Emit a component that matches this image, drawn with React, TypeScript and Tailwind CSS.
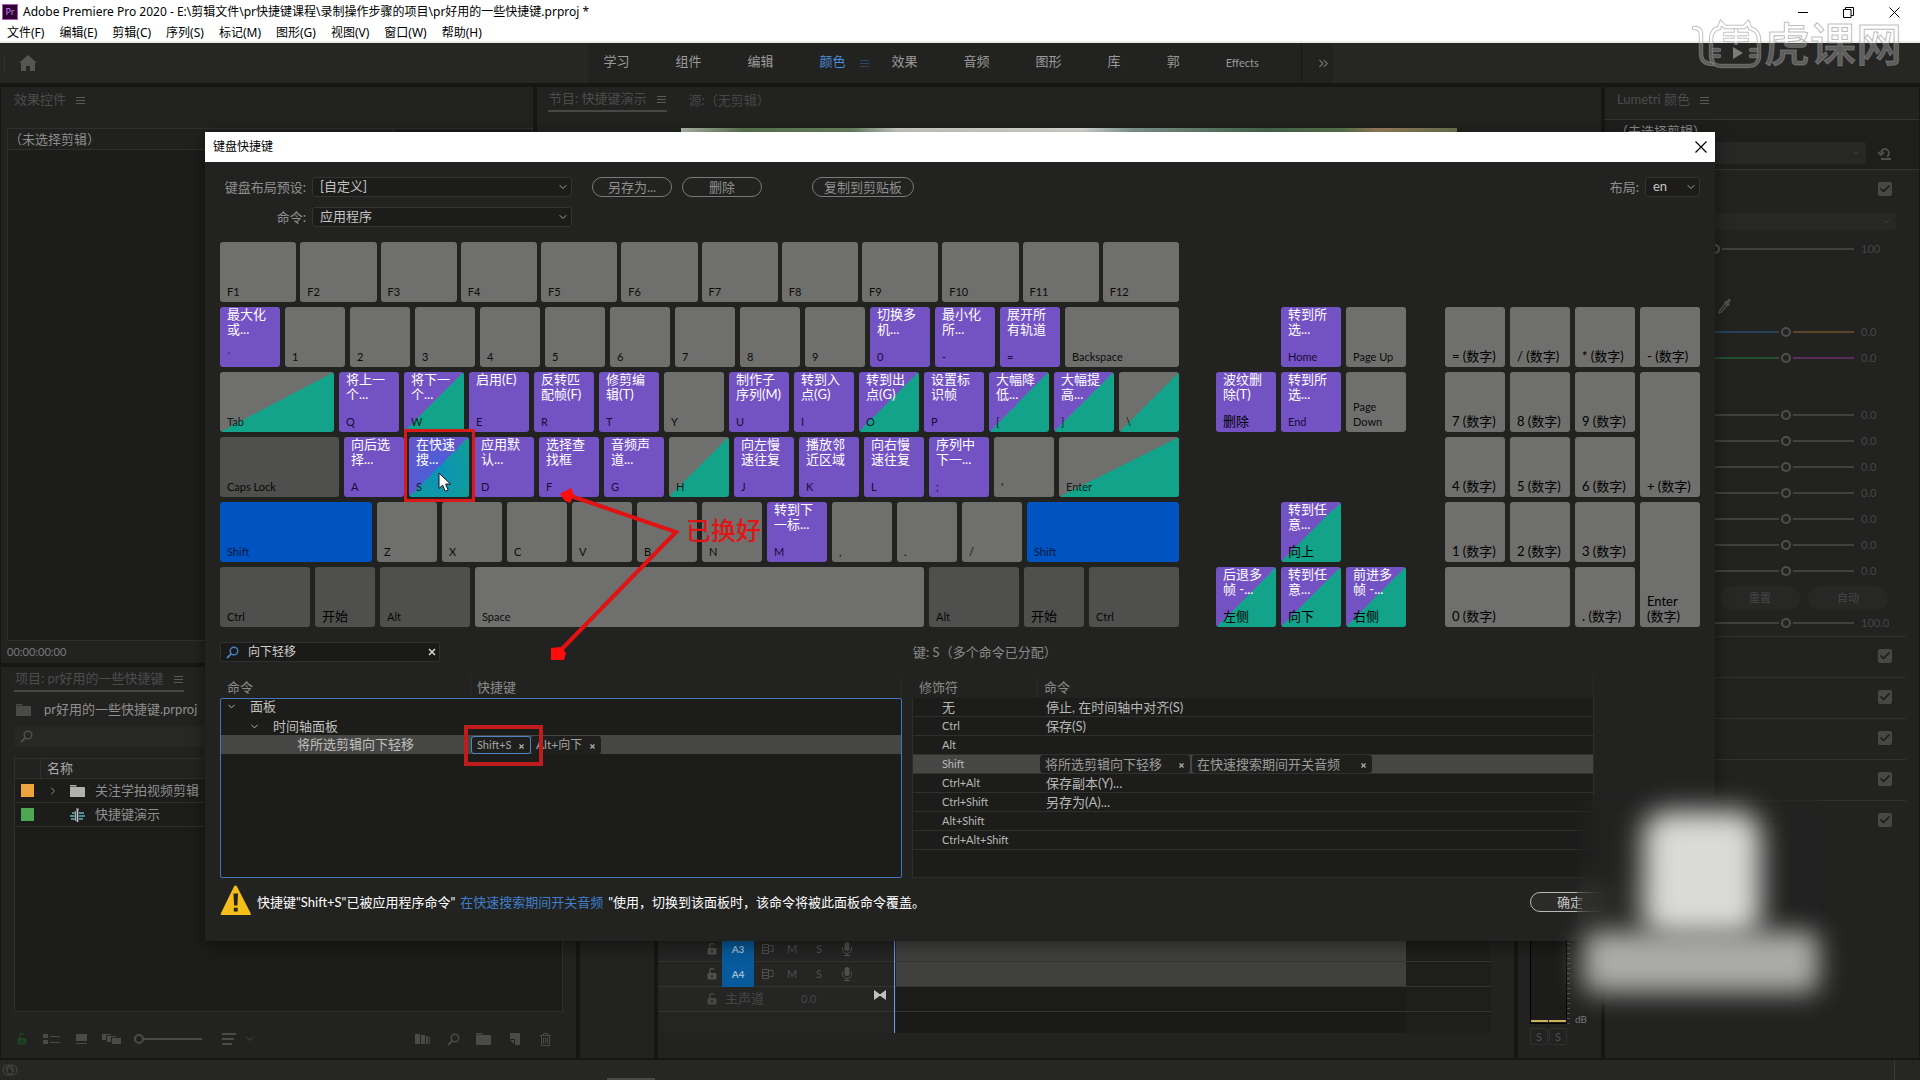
import type { ReactNode } from "react";
import { Check, ChevronDown, ChevronRight, ChevronsRight, X } from "lucide-react";

type KeyDef = {
  label: string;
  cmd?: string;
  tone?: "gray" | "dark" | "purple" | "blue";
  split?: boolean;
  size?: string;
  active?: boolean;
};

const tones = {
  gray: "bg-[#6f6f6d] text-[#0c0c0c]",
  dark: "bg-[#4f4f4d] text-[#080808]",
  purple: "bg-[#7352c4] text-[#170d38]",
  blue: "bg-[#0054c2] text-[#04183a]",
};

const splitTones = {
  gray: "bg-[linear-gradient(to_bottom_right,#6f6f6d_50%,#13a38a_50%)] text-[#0c1a18]",
  dark: "bg-[#4f4f4d]",
  purple: "bg-[linear-gradient(to_bottom_right,#7352c4_50%,#13a38a_50%)] text-[#0a1c24]",
  blue: "bg-[#0054c2]",
};

const functionKeys: KeyDef[] = [
  "F1", "F2", "F3", "F4", "F5", "F6", "F7", "F8", "F9", "F10", "F11", "F12",
].map((label) => ({ label, size: "flex-1" }));

const mainRows: KeyDef[][] = [
  [
    { label: "`", cmd: "最大化\n或...", tone: "purple" },
    { label: "1" },
    { label: "2" },
    { label: "3" },
    { label: "4" },
    { label: "5" },
    { label: "6" },
    { label: "7" },
    { label: "8" },
    { label: "9" },
    { label: "0", cmd: "切换多\n机...", tone: "purple" },
    { label: "-", cmd: "最小化\n所...", tone: "purple" },
    { label: "=", cmd: "展开所\n有轨道", tone: "purple" },
    { label: "Backspace", size: "flex-1" },
  ],
  [
    { label: "Tab", split: true, size: "w-[114px]" },
    { label: "Q", cmd: "将上一\n个...", tone: "purple" },
    { label: "W", cmd: "将下一\n个...", tone: "purple", split: true },
    { label: "E", cmd: "启用(E)", tone: "purple" },
    { label: "R", cmd: "反转匹\n配帧(F)", tone: "purple" },
    { label: "T", cmd: "修剪编\n辑(T)", tone: "purple" },
    { label: "Y" },
    { label: "U", cmd: "制作子\n序列(M)", tone: "purple" },
    { label: "I", cmd: "转到入\n点(G)", tone: "purple" },
    { label: "O", cmd: "转到出\n点(G)", tone: "purple", split: true },
    { label: "P", cmd: "设置标\n识帧", tone: "purple" },
    { label: "[", cmd: "大幅降\n低...", tone: "purple", split: true },
    { label: "]", cmd: "大幅提\n高...", tone: "purple", split: true },
    { label: "\\", split: true, size: "flex-1" },
  ],
  [
    { label: "Caps Lock", tone: "dark", size: "w-[119px]" },
    { label: "A", cmd: "向后选\n择...", tone: "purple" },
    { label: "S", cmd: "在快速\n搜...", tone: "purple", split: true, active: true },
    { label: "D", cmd: "应用默\n认...", tone: "purple" },
    { label: "F", cmd: "选择查\n找框", tone: "purple" },
    { label: "G", cmd: "音频声\n道...", tone: "purple" },
    { label: "H", split: true },
    { label: "J", cmd: "向左慢\n速往复", tone: "purple" },
    { label: "K", cmd: "播放邻\n近区域", tone: "purple" },
    { label: "L", cmd: "向右慢\n速往复", tone: "purple" },
    { label: ";", cmd: "序列中\n下一...", tone: "purple" },
    { label: "'" },
    { label: "Enter", split: true, size: "flex-1" },
  ],
  [
    { label: "Shift", tone: "blue", size: "w-[152px]" },
    { label: "Z" },
    { label: "X" },
    { label: "C" },
    { label: "V" },
    { label: "B" },
    { label: "N" },
    { label: "M", cmd: "转到下\n一标...", tone: "purple" },
    { label: "," },
    { label: "." },
    { label: "/" },
    { label: "Shift", tone: "blue", size: "flex-1" },
  ],
  [
    { label: "Ctrl", tone: "dark", size: "w-[90px]" },
    { label: "开始", tone: "dark" },
    { label: "Alt", tone: "dark", size: "w-[90px]" },
    { label: "Space", size: "flex-1" },
    { label: "Alt", tone: "dark", size: "w-[90px]" },
    { label: "开始", tone: "dark" },
    { label: "Ctrl", tone: "dark", size: "w-[90px]" },
  ],
];

const navKeys: (KeyDef | null)[] = [
  null,
  { label: "Home", cmd: "转到所\n选...", tone: "purple" },
  { label: "Page Up" },
  { label: "删除", cmd: "波纹删\n除(T)", tone: "purple" },
  { label: "End", cmd: "转到所\n选...", tone: "purple" },
  { label: "Page\nDown" },
  null,
  null,
  null,
  null,
  { label: "向上", cmd: "转到任\n意...", tone: "purple", split: true },
  null,
  { label: "左侧", cmd: "后退多\n帧 -...", tone: "purple", split: true },
  { label: "向下", cmd: "转到任\n意...", tone: "purple", split: true },
  { label: "右侧", cmd: "前进多\n帧 -...", tone: "purple", split: true },
];

const numKeys: KeyDef[] = [
  { label: "= (数字)" },
  { label: "/ (数字)" },
  { label: "* (数字)" },
  { label: "- (数字)" },
  { label: "7 (数字)" },
  { label: "8 (数字)" },
  { label: "9 (数字)" },
  { label: "+ (数字)", size: "row-span-2 h-auto" },
  { label: "4 (数字)" },
  { label: "5 (数字)" },
  { label: "6 (数字)" },
  { label: "1 (数字)" },
  { label: "2 (数字)" },
  { label: "3 (数字)" },
  { label: "Enter\n(数字)", size: "row-span-2 h-auto" },
  { label: "0 (数字)", size: "col-span-2" },
  { label: ". (数字)" },
];

const modifiers = [
  { mod: "无", cmd: "停止, 在时间轴中对齐(S)" },
  { mod: "Ctrl", cmd: "保存(S)" },
  { mod: "Alt", cmd: "" },
  { mod: "Shift", chips: ["将所选剪辑向下轻移", "在快速搜索期间开关音频"] },
  { mod: "Ctrl+Alt", cmd: "保存副本(Y)..." },
  { mod: "Ctrl+Shift", cmd: "另存为(A)..." },
  { mod: "Alt+Shift", cmd: "" },
  { mod: "Ctrl+Alt+Shift", cmd: "" },
];

const menus = [
  "文件(F)", "编辑(E)", "剪辑(C)", "序列(S)", "标记(M)", "图形(G)", "视图(V)", "窗口(W)", "帮助(H)",
];

const workspaces = ["学习", "组件", "编辑", "颜色", "效果", "音频", "图形", "库", "郭", "Effects"];

function hasCjk(text: string) {
  return /[\u3000-\u9fff]/.test(text);
}

function Burger({ className = "" }: { className?: string }) {
  return (
    <svg width="9" height="9" viewBox="0 0 9 9" className={className}>
      <path d="M0 1.5h9M0 4.5h9M0 7.5h9" stroke="currentColor" strokeWidth="1" />
    </svg>
  );
}

function MagnifierIcon({ className = "" }: { className?: string }) {
  return (
    <svg width="13" height="13" viewBox="0 0 13 13" fill="none" className={className}>
      <circle cx="8" cy="5" r="3.8" stroke="currentColor" strokeWidth="1.4" />
      <path d="M5.2 7.8L1 12" stroke="currentColor" strokeWidth="1.8" />
    </svg>
  );
}

function FolderIcon({ className = "" }: { className?: string }) {
  return (
    <svg width="15" height="12" viewBox="0 0 15 12" className={className}>
      <path d="M0 0h6l1 1.5H0zM0 2h14a1 1 0 0 1 1 1v9H0z" fill="currentColor" />
    </svg>
  );
}

function LockIcon({ className = "" }: { className?: string }) {
  return (
    <svg width="10" height="12" viewBox="0 0 10 12" fill="none" className={className}>
      <path d="M3 6V3a2 2 0 0 1 4-1" stroke="currentColor" strokeWidth="1.4" />
      <path d="M1 5.5h8V11H1zM5 7v2.5" fill="currentColor" stroke="currentColor" />
      <path d="M5 7v2.5" stroke="#222221" strokeWidth="1.4" />
    </svg>
  );
}

function Key({ item }: { item: KeyDef }) {
  const tone = item.tone ?? "gray";
  const color = item.split ? splitTones[tone] : tones[tone];
  return (
    <button
      type="button"
      className={`relative flex min-h-[60px] flex-col justify-between overflow-visible rounded-[3px] pr-1 pb-[3px] pl-[7px] text-left ${
        item.size ?? "w-[60px]"
      } ${color}`}
    >
      {item.active && (
        <span className="absolute inset-0 rounded-[3px] bg-[radial-gradient(circle_at_50%_60%,rgba(0,120,255,0.4),rgba(0,120,255,0.08))]" />
      )}
      <span className="relative whitespace-pre text-[13px] leading-[15px] text-white">{item.cmd}</span>
      <span className={`relative whitespace-pre leading-[15px] ${hasCjk(item.label) ? "text-[13px] text-black" : "text-[11px]"}`}>
        {item.label}
      </span>
      {item.active && (
        <>
          <span className="absolute -top-[8px] -right-[6px] -bottom-[5px] -left-[5px] z-10 border-[3px] border-[#d81a1a]" />
          <svg width="14" height="22" viewBox="0 0 14 22" className="absolute top-[35px] left-[29px] z-10">
            <path d="M1 1v15.5l3.6-3.3 2.6 6 3-1.3-2.6-5.8H12.500z" fill="#fff" stroke="#111" strokeWidth="1" />
          </svg>
        </>
      )}
    </button>
  );
}

function Keyboard() {
  return (
    <div className="relative mt-[15px] flex items-end">
      <div className="flex w-[959px] flex-col gap-[5px]">
        <div className="flex gap-1">
          {functionKeys.map((k) => (
            <Key key={k.label} item={k} />
          ))}
        </div>
        {mainRows.map((row, i) => (
          <div key={i} className="flex gap-[5px]">
            {row.map((k, j) => (
              <Key key={j} item={k} />
            ))}
          </div>
        ))}
      </div>
      <div className="ml-[37px] grid auto-rows-[60px] grid-cols-[60px_60px_60px] gap-[5px]">
        {navKeys.map((k, i) => (k ? <Key key={i} item={k} /> : <span key={i} />))}
      </div>
      <div className="ml-auto grid auto-rows-[60px] grid-cols-[60px_60px_60px_60px] gap-[5px]">
        {numKeys.map((k) => (
          <Key key={k.label} item={{ ...k, size: k.size ?? "w-[60px]" }} />
        ))}
      </div>
      <Annotation />
    </div>
  );
}

function Annotation() {
  return (
    <div className="pointer-events-none absolute top-[240px] left-[320px] z-20">
      <svg width="150" height="190" viewBox="0 0 150 190">
        <path d="M28 13L136 50L19 170" fill="none" stroke="#e01212" strokeWidth="4" />
        <path d="M20 12l11-6 3 7-4 8-5-2zM11 166l10-1 5 6-2 7H11z" fill="#ff0d0d" />
      </svg>
      <span className="absolute top-[30px] left-[146px] text-[25px] leading-[36px] font-medium whitespace-nowrap text-[#e01616]">
        已换好
      </span>
    </div>
  );
}

function Dropdown({ id, value, className }: { id: string; value: string; className: string }) {
  return (
    <span className={`relative flex ${className}`}>
      <select
        id={id}
        defaultValue={value}
        className="h-5 w-full appearance-none rounded-[3px] border border-[#333332] bg-[#1c1c1b] px-[7px] pb-[2px] text-[13px] leading-[16px] text-[#c4c4c2]"
      >
        <option>{value}</option>
      </select>
      <ChevronDown size={12} className="pointer-events-none absolute top-1 right-[3px] text-[#a0a09e]" />
    </span>
  );
}

function PillButton({ children, className }: { children: ReactNode; className: string }) {
  return (
    <button type="button" className={`h-5 rounded-full border text-[13px] leading-[17px] whitespace-nowrap ${className}`}>
      {children}
    </button>
  );
}

function Chip({ text, className }: { text: string; className: string }) {
  return (
    <span className={`inline-flex h-[18px] items-center justify-between rounded-[3px] bg-[#1f1f1e] px-[5px] ${className}`}>
      {text}
      <button type="button" aria-label="移除" className="pt-[3px] text-[#b0b0ae]">
        <X size={7} strokeWidth={4} />
      </button>
    </span>
  );
}

function CommandList() {
  return (
    <div className="w-[682px]">
      <div className="flex h-[22px] text-[13px] leading-[22px] text-[#8a8a88]">
        <span className="w-[251px] border-r border-[#2a2a29] pl-[7px]">命令</span>
        <span className="flex-1 border-r border-[#2a2a29] pl-[6px]">快捷键</span>
      </div>
      <div className="h-[180px] rounded-[2px] border border-[#4377b4] bg-[#1c1c1b]">
        <table aria-label="命令" className="w-full border-separate border-spacing-0 text-[13px] leading-[17px] text-[#c0c0be]">
          <tbody>
            <tr className="h-[18px]">
              <td className="w-[250px] p-0">
                <span className="flex h-[18px] items-center gap-[13px] pb-1 pl-[5px]">
                  <ChevronDown size={11} />
                  面板
                </span>
              </td>
              <td />
            </tr>
            <tr className="h-[18px]">
              <td className="p-0">
                <span className="flex h-[18px] items-center gap-[13px] pl-[28px]">
                  <ChevronDown size={11} />
                  时间轴面板
                </span>
              </td>
              <td />
            </tr>
            <tr className="h-[19px] bg-[#464645]">
              <td className="p-0 pl-[76px]">将所选剪辑向下轻移</td>
              <td className="p-0">
                <span className="relative flex leading-[14px] text-[#a5a5a3]">
                  <Chip text="Shift+S" className="w-[60px] border border-[#4f86c6] text-[11px]" />
                  <Chip text="Alt+向下" className="w-[70px] text-[12px]" />
                  <span className="absolute -top-[11px] -left-[7px] h-[41px] w-[79px] border-[4px] border-[#c01c1c]" />
                </span>
              </td>
            </tr>
          </tbody>
        </table>
      </div>
    </div>
  );
}

function ModifierList() {
  return (
    <div className="w-[682px]">
      <div className="flex h-[22px] text-[13px] leading-[22px] text-[#8a8a88]">
        <span className="w-[126px] border-r border-[#2a2a29] pl-[7px]">修饰符</span>
        <span className="flex-1 border-r border-[#2a2a29] pl-[6px]">命令</span>
      </div>
      <div className="h-[180px] border border-t-0 border-[#2e2e2d] bg-[#1c1c1b]">
        <table aria-label="修饰符" className="w-full border-separate border-spacing-0 leading-[16px] text-[#b8b8b6]">
          <tbody>
            {modifiers.map((m) => (
              <tr key={m.mod} className={`h-[19px] ${m.chips ? "bg-[#464645]" : ""}`}>
                <td className={`w-[127px] border-b border-[#30302f] p-0 pl-[29px] ${hasCjk(m.mod) ? "text-[13px]" : "text-[11px]"}`}>
                  {m.mod}
                </td>
                <td className="border-b border-[#30302f] p-0">
                  {m.chips ? (
                    <span className="flex gap-[2px] text-[13px] leading-[16px] text-[#9b9b99]">
                      <Chip text={m.chips[0]} className="w-[150px]" />
                      <Chip text={m.chips[1]} className="w-[180px]" />
                    </span>
                  ) : (
                    <span className="flex pl-[6px] text-[13px] leading-[16px] whitespace-pre">{m.cmd}</span>
                  )}
                </td>
              </tr>
            ))}
          </tbody>
        </table>
      </div>
    </div>
  );
}

function ShortcutDialog() {
  return (
    <section
      role="dialog"
      aria-label="键盘快捷键"
      className="w-[1510px] bg-[#222221] shadow-[0_4px_16px_rgba(0,0,0,0.45)]"
    >
      <header className="flex h-[30px] items-center justify-between bg-white pr-2 pl-2 font-['Noto_Sans','Noto_Sans_CJK_SC',sans-serif] text-[12px] text-black">
        <h1>键盘快捷键</h1>
        <button type="button" aria-label="关闭">
          <svg width="12" height="12" viewBox="0 0 12 12" stroke="#000" strokeWidth="1.200">
            <path d="M.5.5l11 11M11.500.5l-11 11" />
          </svg>
        </button>
      </header>
      <div className="px-[15px] pt-[15px] pb-[26px]">
        <div className="flex items-center text-[13px] leading-5 text-[#8f8f8d]">
          <label htmlFor="preset" className="w-[86px] text-right whitespace-nowrap">
            键盘布局预设:
          </label>
          <Dropdown id="preset" value="[自定义]" className="ml-[6px] w-[260px]" />
          <PillButton className="ml-5 w-20 border-[#7a7a78]">另存为...</PillButton>
          <PillButton className="ml-[10px] w-20 border-[#7a7a78]">删除</PillButton>
          <PillButton className="ml-[50px] w-[102px] border-[#7a7a78]">复制到剪贴板</PillButton>
          <label htmlFor="layout" className="ml-auto">
            布局:
          </label>
          <Dropdown id="layout" value="en" className="ml-[6px] w-[55px]" />
        </div>
        <div className="mt-[10px] flex items-center text-[13px] leading-5 text-[#8f8f8d]">
          <label htmlFor="scope" className="w-[86px] text-right">
            命令:
          </label>
          <Dropdown id="scope" value="应用程序" className="ml-[6px] w-[260px]" />
        </div>

        <Keyboard />

        <div className="mt-[15px] flex items-center">
          <div className="flex h-5 w-[220px] items-center rounded-[2px] border border-[#30302f] bg-[#1a1a19] pr-[2px] pl-[5px]">
            <MagnifierIcon className="text-[#4a80c0]" />
            <input
              aria-label="搜索"
              defaultValue="向下轻移"
              className="ml-[9px] min-w-0 flex-1 bg-transparent text-[12px] leading-[18px] text-[#cfcfcd] outline-none"
            />
            <button type="button" aria-label="清除" className="text-[#d0d0ce]">
              <X size={10} strokeWidth={4} />
            </button>
          </div>
          <p className="ml-[473px] text-[13px] leading-5 text-[#8a8a88]">键: S（多个命令已分配）</p>
        </div>

        <div className="mt-[14px] flex gap-[10px]">
          <CommandList />
          <ModifierList />
        </div>

        <footer className="mt-[7px] flex items-center">
          <svg width="32" height="30" viewBox="0 0 32 30">
            <path d="M15.500 0.500q1 0 1.500 1L30.800 28.500q.5 1.500-1 1.500H1.800q-1.500 0-1-1.500L14 1.500q.500-1 1.500-1z" fill="#f5bd1c" />
            <path d="M13.500 8.500h4.500l-.6 12h-3.300zM13.800 22.800h3.900v3.700h-3.900z" fill="#222221" />
          </svg>
          <p className="ml-[5px] pt-1 text-[13px] leading-5 text-white">
            快捷键"Shift+S"已被应用程序命令"
            <a href="#command" className="mx-[5px] text-[#3f7fc8]">
              在快速搜索期间开关音频
            </a>
            "使用，切换到该面板时，该命令将被此面板命令覆盖。
          </p>
          <PillButton className="mt-1 ml-auto w-20 border-[#b8b8b6] bg-[#2b2b2a] text-[#c8c8c6]">确定</PillButton>
          <PillButton className="mt-1 ml-[10px] w-20 border-[#7a7a78] text-[#8f8f8d]">取消</PillButton>
        </footer>
      </div>
    </section>
  );
}

function TitleBar() {
  return (
    <header className="border-b-2 border-[#e9ece9] bg-white font-['Noto_Sans','Noto_Sans_CJK_SC',sans-serif] text-[12px] text-black">
      <div className="flex h-6 items-center pr-[20px] pl-[2px]">
        <span className="flex size-4 items-center justify-center border border-[#b455b4] bg-[#2b0033] text-[9px] leading-3 text-[#dd88ee]">
          Pr
        </span>
        <h1 className="ml-[5px] leading-5">Adobe Premiere Pro 2020 - E:\剪辑文件\pr快捷键课程\录制操作步骤的项目\pr好用的一些快捷键.prproj *</h1>
        <div className="ml-auto flex items-center gap-[35px]">
          <button type="button" aria-label="最小化" className="flex h-3 w-[10px] items-center">
            <span className="h-px w-full bg-black" />
          </button>
          <button type="button" aria-label="还原">
            <svg width="11" height="11" viewBox="0 0 11 11" fill="none" stroke="#000">
              <path d="M.5 2.500h7.500v8H.5zM2.500 2.500V.5h8v8H8" />
            </svg>
          </button>
          <button type="button" aria-label="关闭窗口">
            <svg width="11" height="11" viewBox="0 0 11 11" stroke="#000">
              <path d="M.5.5l10 10M10.500.5l-10 10" />
            </svg>
          </button>
        </div>
      </div>
      <nav className="flex h-[17px] gap-[15px] pl-[7px] leading-[16px]">
        {menus.map((m) => (
          <button key={m} type="button">
            {m}
          </button>
        ))}
      </nav>
    </header>
  );
}

function WorkspaceBar() {
  return (
    <nav className="flex h-10 items-stretch bg-[#262625] text-[13px] text-[#9a9a98]">
      <div className="flex flex-1">
        <div className="ml-1 w-1 self-center border-l border-dotted border-[#3a3a39] py-2" />
        <button type="button" aria-label="主页" className="ml-[11px] text-[#555553]">
          <svg width="18" height="16" viewBox="0 0 18 16">
            <path d="M9 0l9 8h-2v8h-5v-5H7v5H2V8H0z" fill="currentColor" />
          </svg>
        </button>
      </div>
      <div className="flex w-[714px] items-center gap-[46px] border-r border-[#161615] bg-[#222221] pb-[2px] pl-4">
        {workspaces.map((w) => (
          <button
            key={w}
            type="button"
            className={`relative ${w === "颜色" ? "text-[#4a8ddb]" : ""} ${hasCjk(w) ? "" : "pt-[2px] text-[11px] leading-4"}`}
          >
            {w}
            {w === "颜色" && <Burger className="absolute top-[7px] left-10 text-[#2c4468]" />}
          </button>
        ))}
      </div>
      <button type="button" aria-label="更多工作区" className="flex w-[31px] items-center justify-end bg-[#222221] pr-[2px] text-[#70706e]">
        <ChevronsRight size={15} />
      </button>
      <div className="flex-1" />
    </nav>
  );
}

function PanelTab({ title, active }: { title: string; active?: boolean }) {
  return (
    <div className={`flex h-[25px] items-center gap-[10px] px-px pt-px text-[13px] text-[#4c4c4a] ${active ? "border-b-2 border-[#474745]" : ""}`}>
      <span className="whitespace-nowrap">{title}</span>
      <Burger className="text-[#5a5a58]" />
    </div>
  );
}

function EffectControls() {
  return (
    <section className="flex w-[532px] flex-col bg-[#222221] pl-[6px]">
      <div className="flex h-[41px] pl-[6px]">
        <PanelTab title="效果控件" />
      </div>
      <div className="flex-1 border border-[#2f2f2e] bg-[#1c1c1b]">
        <p className="h-[21px] w-[386px] border-r border-b border-[#2f2f2e] bg-[#20201f] pl-px text-[13px] leading-5 text-[#8c8c8a]">
          （未选择剪辑）
        </p>
      </div>
      <p className="h-[22px] text-[11px] leading-[22px] text-[#7a7a78]">00:00:00:00</p>
    </section>
  );
}

function ProgramMonitor() {
  return (
    <section className="min-w-0 flex-1 bg-[#222221]">
      <div className="flex h-[41px] gap-[22px] pl-[11px]">
        <PanelTab title="节目: 快捷键演示" active />
        <span className="text-[13px] leading-[26px] text-[#464644]">源:（无剪辑）</span>
      </div>
      <div className="mx-[144px] h-[430px] bg-[linear-gradient(to_right,#b8c0b4,#5e7a52_8%,#6f8a66_22%,#d4d4ce_28%,#e0e0dc_52%,#88a098_58%,#4a6a50_75%,#5a7850_85%,#a08060_90%,#6a7850)]" />
    </section>
  );
}

function ProjectPanel() {
  return (
    <section className="flex w-[575px] flex-col bg-[#222221] px-[13px]">
      <div className="flex">
        <PanelTab title="项目: pr好用的一些快捷键" active />
      </div>
      <div className="mt-[7px] flex h-[22px] items-center gap-[13px] pl-[2px] text-[13px] text-[#8f8f8d]">
        <FolderIcon className="text-[#4a4a48]" />
        pr好用的一些快捷键.prproj
      </div>
      <div className="mt-[5px] flex h-[21px] items-center rounded-[2px] bg-[#272726] pl-[6px]">
        <MagnifierIcon className="text-[#50504e]" />
        <input aria-label="搜索项目" className="flex-1 bg-transparent text-[13px] outline-none" />
      </div>
      <div className="mt-[11px] flex-1 border border-[#2f2f2e] bg-[#1c1c1b] text-[13px] text-[#8f8f8d]">
        <div className="flex h-[20px] items-center border-b border-[#2f2f2e] bg-[#222221]">
          <span className="h-full w-[26px] border-r border-[#2f2f2e]" />
          <span className="pl-[6px] text-[#a8a8a6]">名称</span>
        </div>
        <div className="flex h-[24px] items-center border-b border-[#2f2f2e] pl-[6px]">
          <span className="size-[13px] bg-[#eea33c]" />
          <ChevronRight size={12} className="ml-[13px]" />
          <FolderIcon className="ml-[11px] text-[#b0b0ae]" />
          <span className="ml-[10px]">关注学拍视频剪辑</span>
        </div>
        <div className="flex h-[24px] items-center border-b border-[#2f2f2e] pl-[6px]">
          <span className="size-[13px] bg-[#4ea852]" />
          <svg width="15" height="14" viewBox="0 0 15 14" fill="none" className="ml-[36px]">
            <path d="M2 5h4M9 5h5M0 8h6M9 8h6M1 11h5M9 11h4" stroke="#4a8f94" strokeWidth="2" />
            <path d="M7.500 1v13" stroke="#c8c8c6" strokeWidth="1.600" />
            <path d="M5.500 3v10M6 1h3" stroke="#a8a8a6" />
          </svg>
          <span className="ml-[10px]">快捷键演示</span>
        </div>
      </div>
      <div className="flex h-[46px] items-center pt-2 text-[#4a4a48]">
        <LockIcon className="ml-[3px] text-[#1b4420]" />
        <svg width="17" height="12" viewBox="0 0 17 12" className="ml-[16px]">
          <path d="M0 1h5v4H0zM0 7h5v4H0zM7 3h10v1H7zM7 9h10v1H7z" fill="currentColor" />
        </svg>
        <svg width="11" height="12" viewBox="0 0 11 12" className="ml-4">
          <path d="M0 1h11v7H0zM0 10h11v1H0z" fill="currentColor" />
        </svg>
        <svg width="19" height="12" viewBox="0 0 19 12" className="ml-[15px]">
          <path d="M0 1h9v1H4v5H0zM5 3h9v1H9v5H5zM10 5h9v6h-9z" fill="currentColor" />
        </svg>
        <input
          type="range"
          aria-label="图标大小"
          defaultValue={0}
          className="ml-[13px] h-[10px] w-[68px] appearance-none bg-[linear-gradient(#4a4a48,#4a4a48)] bg-[length:100%_2px] bg-center bg-no-repeat [&::-webkit-slider-thumb]:size-[10px] [&::-webkit-slider-thumb]:appearance-none [&::-webkit-slider-thumb]:rounded-full [&::-webkit-slider-thumb]:border-2 [&::-webkit-slider-thumb]:border-[#4a4a48] [&::-webkit-slider-thumb]:bg-[#222221]"
        />
        <svg width="14" height="12" viewBox="0 0 14 12" className="ml-[20px]">
          <path d="M0 0h14v2H0zM0 5h12v2H0zM0 10h10v2H0z" fill="currentColor" />
        </svg>
        <ChevronDown size={12} className="ml-2" />
        <svg width="15" height="10" viewBox="0 0 15 10" className="ml-auto">
          <path d="M0 0h5v10H0zM6 1h4v9H6zM11 2h2v8h-2zM14 3h1v7h-1z" fill="currentColor" />
        </svg>
        <MagnifierIcon className="ml-[17px]" />
        <FolderIcon className="ml-4" />
        <svg width="10" height="12" viewBox="0 0 10 12" className="ml-[19px]">
          <path d="M0 0h10v12H5V6H0zM0 7h4v4z" fill="currentColor" />
        </svg>
        <svg width="11" height="13" viewBox="0 0 11 13" fill="none" stroke="currentColor" className="mr-[12px] ml-[20px]">
          <path d="M0 2.500h11M3.500 2V.5h4V2M1.500 3v9.500h8V3M3.500 4.500v6M5.500 4.500v6M7.500 4.500v6" />
        </svg>
      </div>
    </section>
  );
}

function TrackRow({ name }: { name: string }) {
  return (
    <div className="flex h-[25px]">
      <div className="flex w-[238px] items-center border-b border-[#333332] bg-[#252524] pl-[49px] text-[11px] text-[#50504e]">
        <LockIcon />
        <span className="ml-[5px] h-[25px] w-8 bg-[#075a9c] text-center text-[10px] leading-[25px] font-bold text-[#9dbdd6]">{name}</span>
        <svg width="12" height="12" viewBox="0 0 12 12" fill="none" stroke="currentColor" className="ml-2">
          <path d="M.5 1.500h6v3h-6zM.5 4.500h6v3h-6zM.5 7.500h6v3h-6zM7 2.500h4v6H8" />
        </svg>
        <button type="button" aria-label="静音" className="ml-3 w-[12px]">M</button>
        <button type="button" aria-label="独奏" className="ml-[15px] w-[12px]">S</button>
        <svg width="10" height="14" viewBox="0 0 10 14" fill="none" className="ml-[17px]">
          <rect x="2.500" y="0" width="5" height="9" rx="2.500" fill="currentColor" />
          <path d="M.5 5v2a4.500 4.500 0 0 0 9 0V5M5 11.500V13M2 13.500h6" stroke="currentColor" />
        </svg>
      </div>
      <div className="flex-1 border-b border-[#333332] bg-[#40403f]" />
      <div className="w-[85px] border-b border-[#333332] bg-[#1e1e1d]" />
    </div>
  );
}

function Timeline() {
  return (
    <section className="flex min-w-0 flex-1 flex-col justify-end bg-[#222221] pr-[23px] pb-[25px]">
      <div className="relative">
        <TrackRow name="A3" />
        <TrackRow name="A4" />
        <div className="flex h-[25px]">
          <div className="flex w-[238px] items-center border-b border-[#333332] bg-[#252524] pl-[49px] text-[#464644]">
            <LockIcon />
            <span className="ml-[8px] text-[13px]">主声道</span>
            <span className="ml-[37px] text-[11px]">0.0</span>
            <svg width="12" height="10" viewBox="0 0 12 10" className="mr-[10px] mb-2 ml-auto">
              <path d="M0 0l5 3.500v3L0 10zM12 0L7 3.500v3l5 3.500zM5 4h2v2H5z" fill="#c0c0be" />
            </svg>
          </div>
          <div className="flex-1 border-b border-[#333332] bg-[#1b1b1a]" />
          <div className="w-[85px] border-b border-[#333332] bg-[#1e1e1d]" />
        </div>
        <div className="flex h-[21px]">
          <div className="w-[238px] bg-[#242423]" />
          <div className="flex-1 bg-[#1a1a19]" />
          <div className="w-[85px] bg-[#1e1e1d]" />
        </div>
        <span className="absolute top-0 bottom-0 left-[236px] w-px bg-[#5b9bf0]" />
      </div>
    </section>
  );
}

function AudioMeter() {
  return (
    <section className="flex w-[83px] flex-col justify-end bg-[#222221] pb-[13px] pl-3">
      <div className="flex items-end">
        <div className="flex h-[260px] w-[37px] items-end gap-px border border-black bg-[#1c1c1b]">
          <span className="mb-px h-[2px] flex-1 bg-[#c9b458]" />
          <span className="mb-px h-[2px] flex-1 bg-[#c9b458]" />
        </div>
        <div className="h-[260px] w-[3px] bg-[repeating-linear-gradient(to_top,#50504e_0_1px,transparent_1px_5px)]" />
        <span className="ml-[5px] text-[10px] leading-[10px] text-[#7a7a78]">dB</span>
      </div>
      <div className="mt-1 flex gap-px text-[11px] leading-[15px] text-[#50504e]">
        <button type="button" aria-label="独奏左声道" className="w-[18px] rounded-[2px] border border-[#303030]">S</button>
        <button type="button" aria-label="独奏右声道" className="w-[18px] rounded-[2px] border border-[#303030]">S</button>
      </div>
    </section>
  );
}

const tracks = {
  plain: "bg-[linear-gradient(#40403f,#40403f)]",
  warm: "bg-[linear-gradient(to_right,#24425c_50%,#5c4424_65%)]",
  tint: "bg-[linear-gradient(to_right,#245030_50%,#5a2c58_65%)]",
};

function SliderRow({ name, value, pos = 59, track = "plain" }: { name: string; value: string; pos?: number; track?: keyof typeof tracks }) {
  return (
    <div className="flex h-[26px] items-center pr-[27px] text-[11px] text-[#464644]">
      <input
        type="range"
        aria-label={name}
        defaultValue={pos}
        className={`ml-auto h-[10px] w-[164px] appearance-none bg-[length:100%_2px] bg-center bg-no-repeat ${tracks[track]} [&::-webkit-slider-thumb]:size-[10px] [&::-webkit-slider-thumb]:appearance-none [&::-webkit-slider-thumb]:rounded-full [&::-webkit-slider-thumb]:border-2 [&::-webkit-slider-thumb]:border-[#4e4e4c] [&::-webkit-slider-thumb]:bg-[#222221] [&::-webkit-slider-thumb]:shadow-[0_0_0_2px_#222221]`}
      />
      <span className="ml-[7px] w-[31px]">{value}</span>
    </div>
  );
}

function Tick({ name }: { name: string }) {
  return (
    <span className="relative flex">
      <input type="checkbox" aria-label={name} defaultChecked className="size-[14px] appearance-none rounded-[2px] bg-[#474745]" />
      <Check size={12} strokeWidth={3.5} className="pointer-events-none absolute top-px left-px text-[#1c1c1b]" />
    </span>
  );
}

function LumetriPanel() {
  return (
    <section className="flex w-[314px] flex-col bg-[#222221]">
      <div className="flex h-[28px] pl-[11px]">
        <PanelTab title="Lumetri 颜色" />
      </div>
      <div className="mt-1 h-[51px] border-y border-[#343433] bg-[#1e1e1d]">
        <p className="pl-[10px] text-[13px] leading-[22px] text-[#8c8c8a]">（未选择剪辑）</p>
        <div className="flex items-center gap-[12px] pr-[27px] pl-[20px]">
          <span className="relative flex flex-1">
            <select aria-label="预设" className="h-[22px] w-full appearance-none rounded-[2px] bg-[#272726]" />
            <ChevronDown size={12} className="pointer-events-none absolute top-[5px] right-1 text-[#464644]" />
          </span>
          <svg width="14" height="14" viewBox="0 0 14 14" fill="none" stroke="#50504e" strokeWidth="1.800">
            <path d="M3 6.500a4 4 0 1 1 6 4M0 6l3 3 3-3M3 13h10" />
          </svg>
        </div>
      </div>
      <div className="mr-[13px] flex h-[37px] items-center justify-end pr-[14px]">
        <Tick name="基本校正" />
      </div>
      <div className="relative mt-[6px] mr-[23px] ml-[20px] flex">
        <select aria-label="输入 LUT" className="h-[17px] w-full appearance-none rounded-[2px] bg-[#272726]" />
        <ChevronDown size={11} className="pointer-events-none absolute top-[3px] right-1 text-[#40403f]" />
      </div>
      <div className="mt-[6px]">
        <SliderRow name="HDR 白色" value="100" pos={13} />
      </div>
      <svg width="14" height="16" viewBox="0 0 14 16" fill="none" className="mt-[36px] ml-[113px]">
        <path d="M8 5L2 12l-1 3 2.500-1L9.500 7" stroke="#50504e" strokeWidth="1.300" />
        <path d="M7 3.500l4 4M9 5l3-3.500" stroke="#50504e" strokeWidth="3" />
      </svg>
      <div className="mt-[5px]">
        <SliderRow name="色温" value="0.0" track="warm" />
        <SliderRow name="色彩" value="0.0" track="tint" />
      </div>
      <div className="mt-[31px]">
        {["曝光", "对比度", "高光", "阴影", "白色", "黑色", "HDR 高光"].map((n) => (
          <SliderRow key={n} name={n} value="0.0" />
        ))}
      </div>
      <div className="mt-[2px] flex h-6 justify-end gap-2 pr-[31px] text-[11px] text-[#464644]">
        <button type="button" className="w-20 rounded-full bg-[#272726]">重置</button>
        <button type="button" className="w-20 rounded-full bg-[#272726]">自动</button>
      </div>
      <SliderRow name="饱和度" value="100.0" />
      {["创意", "曲线", "色轮和匹配", "HSL 辅助", "晕影"].map((n) => (
        <div key={n} className="mr-[13px] flex h-[41px] items-center justify-end border-t border-[#30302f] pr-[14px] pb-[2px]">
          <Tick name={n} />
        </div>
      ))}
    </section>
  );
}

function TigerLines() {
  return (
    <>
      <path d="M3 10c8 0 7 5 7 13v12c0 8 4 11 12 11" />
      <path d="M20 22c0-7 3-11 8-12l2-5 4 4h19l4-4 2 5c6 2 9 5 9 12v16c0 6-4 10-10 10H30c-6 0-10-4-10-10z" />
      <path d="M34 16h22M34 22h22M45 12v13M22 32h6M22 38h6M60 32h6M60 38h6" />
    </>
  );
}

function Watermark() {
  return (
    <div className="pointer-events-none absolute top-[18px] right-[18px] z-10 flex items-center">
      <svg width="73" height="52" viewBox="0 0 73 52" fill="none" strokeLinecap="round">
        <mask id="tiger">
          <rect width="73" height="52" fill="#fff" />
          <g stroke="#000" strokeWidth="2.500">
            <TigerLines />
          </g>
        </mask>
        <g mask="url(#tiger)" stroke="#8f8f8d" strokeOpacity="0.6" strokeWidth="4.500">
          <TigerLines />
        </g>
        <g stroke="#fff" strokeOpacity="0.25" strokeWidth="3">
          <TigerLines />
        </g>
        <path d="M42 29l10 6-10 6z" fill="#7c7c7a" />
      </svg>
      <span className="text-[46px] leading-[50px] font-medium text-white/25 [-webkit-text-stroke:1px_rgba(143,143,141,0.6)]">虎课网</span>
    </div>
  );
}

function BlurredBadge() {
  return (
    <div aria-hidden="true" className="pointer-events-none absolute right-[95px] bottom-[75px] z-30 h-[210px] w-[248px] rounded-[20px] backdrop-blur-[14px]">
      <span className="absolute top-[16px] left-[66px] h-[128px] w-[118px] rounded-[24px] bg-[#dadad8] blur-[14px]" />
      <span className="absolute top-[136px] left-[6px] h-[62px] w-[236px] rounded-[12px] bg-[#acacaa] blur-[13px]" />
    </div>
  );
}

export default function App() {
  return (
    <div className="relative flex min-h-screen flex-col overflow-hidden bg-[#161615] font-[Lato,'Noto_Sans_CJK_SC',sans-serif] [text-spacing-trim:space-all]">
      <TitleBar />
      <WorkspaceBar />
      <main className="flex flex-1 gap-1 px-px pt-1">
        <div className="flex min-w-0 flex-1 flex-col gap-1">
          <div className="flex flex-1 gap-1">
            <EffectControls />
            <ProgramMonitor />
          </div>
          <div className="flex h-[391px] gap-1">
            <ProjectPanel />
            <section className="w-[74px] bg-[#222221]" />
            <Timeline />
            <AudioMeter />
          </div>
        </div>
        <LumetriPanel />
      </main>
      <footer className="mt-[2px] flex h-5 items-center bg-[#262625] pr-[25px] pl-[2px]">
        <svg width="16" height="12" viewBox="0 0 16 12" fill="none" stroke="#4a4a48">
          <circle cx="6" cy="6" r="5" />
          <circle cx="10" cy="6" r="5" />
          <path d="M4 6a2.500 2.500 0 0 1 5-1l3 3" />
        </svg>
        <span className="ml-[589px] h-[2px] w-12 self-end bg-[#4a4a48]" />
        <span className="ml-auto h-5 w-px bg-[#3a3a39]" />
      </footer>
      <div className="absolute inset-x-0 top-[132px] z-20 flex justify-center">
        <ShortcutDialog />
      </div>
      <Watermark />
      <BlurredBadge />
    </div>
  );
}
